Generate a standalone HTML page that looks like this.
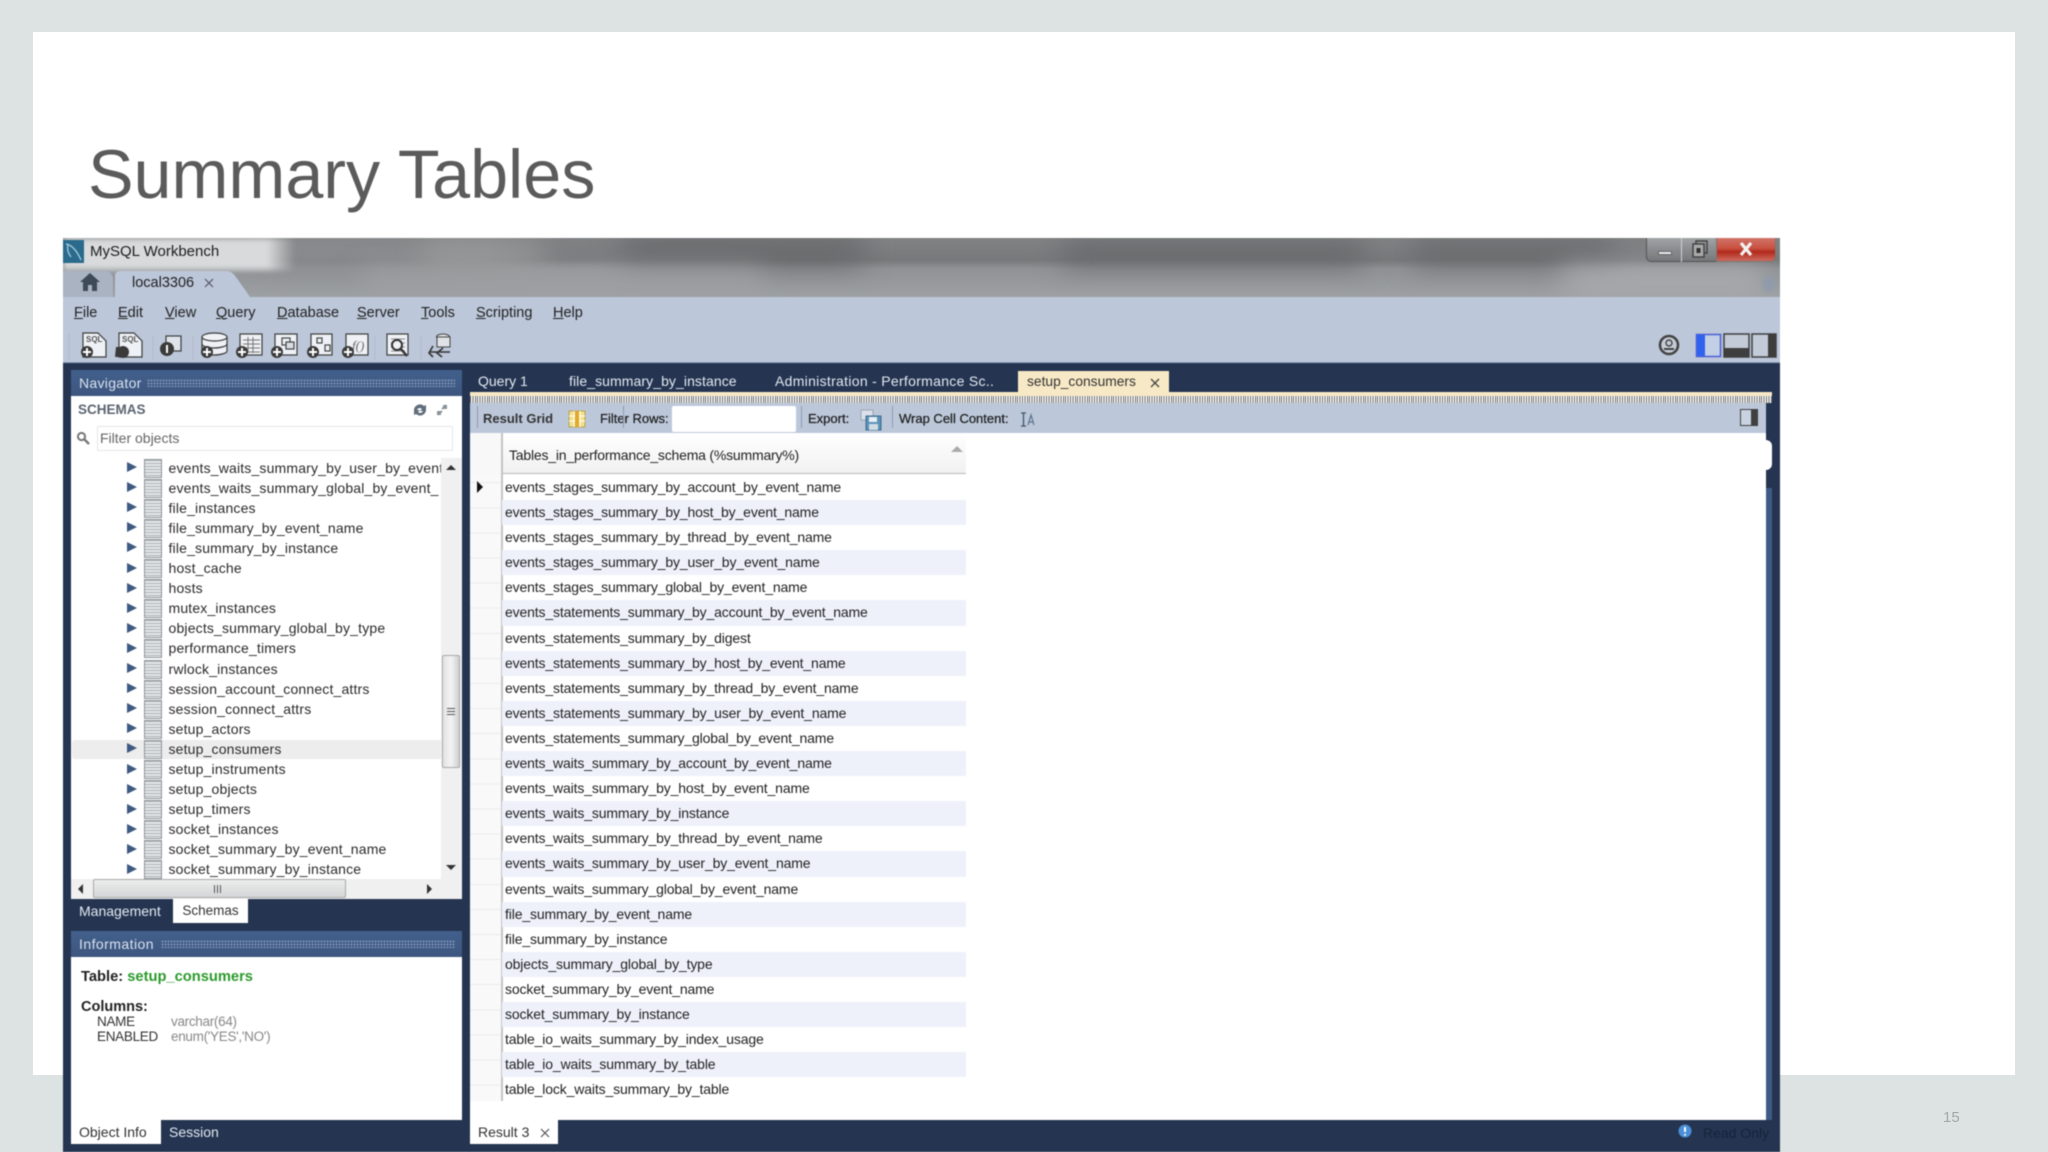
<!DOCTYPE html>
<html><head><meta charset="utf-8"><title>Summary Tables</title>
<style>
*{box-sizing:border-box}
html,body{margin:0;padding:0}
body{width:2048px;height:1152px;position:relative;overflow:hidden;background:#dde3e2;font-family:"Liberation Sans",sans-serif;color:#222}
.a{position:absolute;white-space:nowrap}
#sl{left:33px;top:32px;width:1982px;height:1043px;background:#fff}
#ttl{left:88px;top:136px;font-size:68.3px;line-height:78px;color:#5b5b5b}
#pn{left:1943px;top:1109px;font-size:15px;color:#a3a8a8}
#win{left:63px;top:238px;width:1717px;height:914px;background:#253551;overflow:hidden}
.blur{filter:blur(.45px)}
.tb{left:0;top:0;width:1717px;height:59px;background:linear-gradient(#808284 0,#77797b 22px,#909396 31px,#9ea1a4 59px)}
.sm{position:absolute;filter:blur(14px)}
.men{font-size:14.5px;top:66px;color:#222;line-height:18px}
.men u{text-decoration-thickness:1px}
.hd{background:linear-gradient(#42608c,#3d5680);color:#d9e2ee;font-size:14px;line-height:26px;height:26px;padding-left:8px}
.dots{position:absolute;top:9px;height:8px;background-image:radial-gradient(#7f95b5 .9px,transparent 1.1px);background-size:3px 3px}
.tree{left:8px;top:219.6px;width:370px;font-size:14px;letter-spacing:.17px;color:#2b2b2b;overflow:hidden}
.tr{height:20.1px;line-height:20px;position:relative;padding-left:97.5px;white-space:nowrap}
.tr:before{content:"";position:absolute;left:56px;top:4.5px;border-left:10px solid #3e5a83;border-top:5.5px solid transparent;border-bottom:5.5px solid transparent}
.tr:after{content:"";position:absolute;left:73px;top:1px;width:16px;height:17px;border:1px solid #8f959b;background:repeating-linear-gradient(#adb2b7 0 1px,#e4e6e9 1px 3px)}
.gr{left:439px;top:237px;width:496px;font-size:14px;letter-spacing:-.14px;color:#222}
.row{height:25.1px;line-height:25px;padding-left:3px;white-space:nowrap;width:464px}
.row:nth-child(even){background:#eef1fa}
.gut{position:absolute;left:407px;top:195px;width:31px;height:668px;background:repeating-linear-gradient(#f9f9f9 0 24.1px,#ececec 24.1px 25.1px)}
.tabt{font-size:14px;color:#e2e8f1;line-height:20px}
</style></head><body>
<div class="a" id="sl"></div>
<div class="a blur" id="ttl">Summary Tables</div>
<div class="a" id="pn">15</div>
<div class="a blur" id="win">
 <!-- title bar -->
 <div class="a tb"></div>
 <div class="sm" style="left:200px;top:2px;width:240px;height:28px;background:#8e9092"></div>
 <div class="sm" style="left:360px;top:4px;width:120px;height:24px;background:#9b9b9b"></div>
 <div class="sm" style="left:560px;top:0;width:240px;height:26px;background:#646668"></div>
 <div class="sm" style="left:1000px;top:4px;width:300px;height:22px;background:#636567"></div>
 <div class="sm" style="left:1350px;top:2px;width:200px;height:24px;background:#66686a"></div>
 <div class="sm" style="left:1500px;top:30px;width:200px;height:24px;background:#aeb0b2"></div>
 <div class="sm" style="left:300px;top:34px;width:400px;height:22px;background:#a0a2a4"></div>
 <div class="a" style="left:0;top:0;width:232px;height:32px;background:linear-gradient(90deg,#d8dadb 0,#d8dadb 88%,rgba(200,200,200,0));filter:blur(3px)"></div>
 <svg class="a" style="left:0;top:2px" width="22" height="24" viewBox="0 0 22 24"><rect width="21" height="23" fill="#2a6a8c"/><path d="M3 4c6 1 11 7 15 16M5 5c-1 4 0 8 3 12" stroke="#9cc6d8" stroke-width="1.4" fill="none"/></svg>
 <div class="a" style="left:27px;top:4px;font-size:15px;line-height:20px;color:#1e1e1e">MySQL Workbench</div>
 <!-- tabs -->
 <div class="a" style="left:0;top:33px;width:50px;height:26px;background:#a9b3c2;border-radius:0 8px 0 0"></div>
 <svg class="a" style="left:16px;top:34px" width="22" height="20" viewBox="0 0 22 20"><path d="M11 1 1 10h3v9h5v-6h4v6h5v-9h3z" fill="#3e4a58"/></svg>
 <svg class="a" style="left:52px;top:32px" width="200" height="27" viewBox="0 0 200 27"><path d="M0 27V6Q0 1 6 1h105q6 0 10 6l14 20z" fill="#bcc7d9"/></svg>
 <div class="a" style="left:69px;top:35px;font-size:14.5px;line-height:20px;color:#222">local3306</div>
 <svg class="a" style="left:141px;top:40px" width="10" height="10" viewBox="0 0 10 10"><path d="M1 1l8 8M9 1 1 9" stroke="#556" stroke-width="1.2"/></svg>
 <!-- window buttons -->
 <div class="a" style="left:1583px;top:0;width:98px;height:24px;border:1px solid #555;border-top:0;border-radius:0 0 5px 5px;background:linear-gradient(#a0a2a4,#8b8d90 50%,#75777a)"></div>
 <div class="a" style="left:1618px;top:0;width:1px;height:24px;background:#cfd2d4"></div>
 <div class="a" style="left:1653px;top:0;width:60px;height:24px;border:1px solid #777;border-top:0;border-radius:0 0 5px 0;background:linear-gradient(#d0756a,#c9503f 45%,#b22a1c 60%,#cf6a5e)"></div>
 <div class="a" style="left:1595px;top:13px;width:14px;height:4px;background:#e9ecef;border:1px solid #666"></div>
 <svg class="a" style="left:1628px;top:2px" width="18" height="18" viewBox="0 0 18 18"><rect x="5" y="1" width="11" height="12" fill="none" stroke="#444" stroke-width="1.5"/><rect x="2" y="4" width="11" height="13" fill="#aaa" stroke="#444" stroke-width="1.5"/><rect x="5.5" y="8" width="4" height="5" fill="#333"/></svg>
 <svg class="a" style="left:1676px;top:4px" width="14" height="14" viewBox="0 0 14 14"><path d="M2 1l10 12M12 1 2 13" stroke="#f2f2f2" stroke-width="3.2"/></svg>
 <div class="a" style="left:1700px;top:39px;width:12px;height:14px;background:#8f9aac;border-radius:6px;filter:blur(2px)"></div>
 <!-- menu + toolbar -->
 <div class="a" style="left:0;top:59px;width:1717px;height:65px;background:#bcc7d9"></div>
 <div class="a" style="left:0;top:124px;width:1717px;height:1px;background:#8ea0bd"></div>
 <div class="a men" style="left:11px"><u>F</u>ile</div>
 <div class="a men" style="left:55px"><u>E</u>dit</div>
 <div class="a men" style="left:102px"><u>V</u>iew</div>
 <div class="a men" style="left:153px"><u>Q</u>uery</div>
 <div class="a men" style="left:214px"><u>D</u>atabase</div>
 <div class="a men" style="left:294px"><u>S</u>erver</div>
 <div class="a men" style="left:358px"><u>T</u>ools</div>
 <div class="a men" style="left:413px"><u>S</u>cripting</div>
 <div class="a men" style="left:490px"><u>H</u>elp</div>
 <svg class="a" style="left:0;top:94px" width="450" height="30" viewBox="0 0 450 30">
  <g fill="#eef1f5" stroke="#3d3d3d" stroke-width="1.2">
   <path d="M20 1h15l8 8v16H20z"/><path d="M56 1h15l8 8v16H56z"/>
   <rect x="103" y="4" width="15" height="15" fill="#dfe4ea"/>
   <rect x="177" y="2" width="22" height="21"/><rect x="212" y="2" width="22" height="21"/><rect x="248" y="2" width="21" height="21"/><rect x="283" y="2" width="22" height="21"/>
   <rect x="324" y="2" width="21" height="21"/>
   <path d="M139 5v14c0 2 5 4 12 4s13-2 13-4V5z"/>
   <ellipse cx="151.500" cy="5" rx="12.500" ry="4"/>
  </g>
  <path d="M139 12c0 2 5 4 12 4s13-2 13-4" fill="none" stroke="#3d3d3d" stroke-width="1.2"/>
  <g stroke="#777" stroke-width="1"><path d="M180 8h17M180 12h17M180 16h17M180 20h17M185 5v16M190 5v16"/></g>
  <g fill="none" stroke="#444" stroke-width="1.2"><rect x="219" y="6" width="8" height="7"/><rect x="223" y="10" width="8" height="7" fill="#d8dce4"/><rect x="254" y="6" width="5" height="5"/><rect x="262" y="13" width="5" height="6"/></g>
  <g fill="#555" font-size="8" font-family="Liberation Sans" font-weight="700"><text x="23" y="10">SQL</text><text x="59" y="10">SQL</text></g>
  <text x="289" y="18" font-size="13" fill="#666" font-family="Liberation Serif" font-style="italic">f()</text>
  <g stroke="#888"><path d="M328 7h14M328 11h14M328 15h14M328 19h14"/></g>
  <circle cx="334" cy="13" r="5" fill="#eef1f5" stroke="#333" stroke-width="2"/><path d="M338 17l6 7" stroke="#333" stroke-width="2.4"/>
  <g fill="#3a3a3a"><circle cx="24" cy="20" r="6"/><circle cx="60" cy="20" r="6"/><path d="M53 15h9l2 10H52z"/><circle cx="104" cy="17" r="7"/><circle cx="144" cy="20" r="6"/><circle cx="179" cy="20" r="6"/><circle cx="214" cy="20" r="6"/><circle cx="250" cy="20" r="6"/><circle cx="285" cy="20" r="6"/></g>
  <g stroke="#fff" stroke-width="2"><path d="M20 20h8M24 16v8M140 20h8M144 16v8M175 20h8M179 16v8M210 20h8M214 16v8M246 20h8M250 16v8M281 20h8M285 16v8M104 13v8"/></g>
  <ellipse cx="380" cy="5" rx="6.500" ry="3" fill="#dfe3e8" stroke="#444"/><rect x="374" y="5" width="13" height="10" fill="#dfe3e8" stroke="#444"/><path d="M367 20h20M370 14l-4 7 4 4M380 16l-6 5 5 4" stroke="#333" stroke-width="1.6" fill="none"/>
  <g stroke="#a6b0c0" stroke-dasharray="1 1"><path d="M6 2v26M90 4v24M130 4v24M312 4v24M358 4v24"/></g>
 </svg>
 <svg class="a" style="left:1594px;top:95px" width="120" height="26" viewBox="0 0 120 26">
  <circle cx="12" cy="12" r="9" fill="#c5ccd8" stroke="#444" stroke-width="2.6"/><circle cx="12" cy="10" r="3" fill="none" stroke="#444" stroke-width="1.4"/><path d="M7 16h10" stroke="#444" stroke-width="2"/>
  <rect x="39.500" y="1.500" width="24" height="22" fill="#c3cfe4" stroke="#4860d8" stroke-width="1.5"/><rect x="40" y="2" width="8" height="21" fill="#2f62ee"/>
  <rect x="67" y="1" width="25" height="23" fill="#c3cbd8" stroke="#404040" stroke-width="1.5"/><rect x="67" y="15" width="25" height="9" fill="#3e3e3e"/>
  <rect x="95" y="1" width="24" height="23" fill="#c3cbd8" stroke="#404040" stroke-width="1.5"/><rect x="111" y="1" width="8" height="23" fill="#3e3e3e"/>
 </svg>
 <!-- navigator -->
 <div class="a hd" style="left:8px;top:132px;width:391px;letter-spacing:.3px">Navigator<div class="dots" style="left:76px;width:308px"></div></div>
 <div class="a" style="left:8px;top:158px;width:391px;height:503px;background:#fff"></div>
 <div class="a" style="left:15px;top:160px;font-size:13.5px;font-weight:700;line-height:24px;color:#5b6470">SCHEMAS</div>
 <svg class="a" style="left:350px;top:165px" width="36" height="14" viewBox="0 0 36 14"><path d="M1 7a6 6 0 0 1 10-4l2-1v6H7l2-2a3 3 0 0 0-5 1zM13 7a6 6 0 0 1-10 4l-2 1V7h6L5 9a3 3 0 0 0 5-1z" fill="#5f6d7c"/><path d="M25 12l4-4M33 2l-4 4" stroke="#6d7883" stroke-width="1.4"/><rect x="24" y="8" width="4" height="4" fill="#8a939c"/><rect x="30" y="2" width="4" height="4" fill="#8a939c"/></svg>
 <svg class="a" style="left:13px;top:193px" width="14" height="14" viewBox="0 0 14 14"><circle cx="5.5" cy="5.5" r="3.6" fill="none" stroke="#777" stroke-width="2"/><path d="M8 8l5 5" stroke="#777" stroke-width="2.4"/></svg>
 <div class="a" style="left:34px;top:188px;width:356px;height:25px;background:#fff;border:1px solid #e6e6e6;font-size:14px;line-height:23px;color:#666;padding-left:2px">Filter objects</div>
 <div class="a" style="left:9px;top:502px;width:371px;height:19px;background:#ededed;border-radius:3px"></div>
 <div class="a tree">
  <div class="tr">events_waits_summary_by_user_by_event</div><div class="tr">events_waits_summary_global_by_event_</div><div class="tr">file_instances</div><div class="tr">file_summary_by_event_name</div><div class="tr">file_summary_by_instance</div><div class="tr">host_cache</div><div class="tr">hosts</div><div class="tr">mutex_instances</div><div class="tr">objects_summary_global_by_type</div><div class="tr">performance_timers</div><div class="tr">rwlock_instances</div><div class="tr">session_account_connect_attrs</div><div class="tr">session_connect_attrs</div><div class="tr">setup_actors</div><div class="tr">setup_consumers</div><div class="tr">setup_instruments</div><div class="tr">setup_objects</div><div class="tr">setup_timers</div><div class="tr">socket_instances</div><div class="tr">socket_summary_by_event_name</div><div class="tr">socket_summary_by_instance</div>
 </div>
 <!-- tree scrollbars -->
 <div class="a" style="left:378px;top:220px;width:21px;height:421px;background:#f0f0f0"></div>
 <div class="a" style="left:379px;top:417px;width:18px;height:113px;background:linear-gradient(90deg,#e2e3e4,#f3f3f3 50%,#cfd0d1);border:1px solid #a9a9a9;border-radius:2px"></div>
 <div class="a" style="left:384px;top:470px;width:8px;height:8px;background:repeating-linear-gradient(#555 0 1px,transparent 1px 3px)"></div>
 <div class="a" style="left:383px;top:227px;border-bottom:5px solid #333;border-left:5px solid transparent;border-right:5px solid transparent"></div>
 <div class="a" style="left:383px;top:627px;border-top:5px solid #333;border-left:5px solid transparent;border-right:5px solid transparent"></div>
 <div class="a" style="left:8px;top:641px;width:391px;height:20px;background:#f0f0f0"></div>
 <div class="a" style="left:30px;top:641px;width:253px;height:19px;background:linear-gradient(#eceded,#d5d6d7);border:1px solid #a9a9a9;border-radius:2px"></div>
 <div class="a" style="left:151px;top:647px;width:8px;height:8px;background:repeating-linear-gradient(90deg,#555 0 1px,transparent 1px 3px)"></div>
 <div class="a" style="left:15px;top:646px;border-right:5px solid #333;border-top:5px solid transparent;border-bottom:5px solid transparent"></div>
 <div class="a" style="left:364px;top:646px;border-left:5px solid #333;border-top:5px solid transparent;border-bottom:5px solid transparent"></div>
 <!-- nav tabs -->
 <div class="a tabt" style="left:16px;top:663px">Management</div>
 <div class="a" style="left:110px;top:661px;width:75px;height:24px;background:#fff;font-size:13.5px;color:#333;line-height:24px;text-align:center">Schemas</div>
 <!-- info -->
 <div class="a hd" style="left:8px;top:693px;width:391px;letter-spacing:.45px">Information<div class="dots" style="left:90px;width:294px"></div></div>
 <div class="a" style="left:8px;top:719px;width:391px;height:163px;background:#fff"></div>
 <div class="a" style="left:18px;top:730px;font-size:14.7px;font-weight:700;line-height:18px;color:#222">Table: <span style="color:#2c9a2c">setup_consumers</span></div>
 <div class="a" style="left:18px;top:760px;font-size:14.5px;font-weight:700;line-height:18px;color:#222">Columns:</div>
 <div class="a" style="left:34px;top:776px;font-size:13.5px;line-height:15px;color:#333;letter-spacing:-.3px">NAME<br>ENABLED</div>
 <div class="a" style="left:108px;top:776px;font-size:13.5px;line-height:15px;color:#888;letter-spacing:-.3px">varchar(64)<br>enum('YES','NO')</div>
 <div class="a" style="left:8px;top:882px;width:90px;height:24px;background:#fff;font-size:14px;color:#333;line-height:24px;padding-left:8px">Object Info</div>
 <div class="a tabt" style="left:106px;top:884px">Session</div>
 <!-- editor tabs -->
 <div class="a tabt" style="left:415px;top:133px">Query 1</div>
 <div class="a tabt" style="left:506px;top:133px;letter-spacing:.08px">file_summary_by_instance</div>
 <div class="a tabt" style="left:712px;top:133px;letter-spacing:.3px">Administration - Performance Sc..</div>
 <div class="a" style="left:955px;top:133px;width:151px;height:22px;background:#f8e9c6;font-size:13.8px;line-height:22px;color:#333;padding-left:9px">setup_consumers</div>
 <svg class="a" style="left:1087px;top:140px" width="10" height="10" viewBox="0 0 10 10"><path d="M1 1l8 8M9 1 1 9" stroke="#444" stroke-width="1.3"/></svg>
 <!-- editor area -->
 <div class="a" style="left:407px;top:154px;width:1302px;height:4px;background:#f8e9c6"></div>
 <div class="a" style="left:407px;top:158px;width:1302px;height:7px;background:#fff repeating-linear-gradient(90deg,#666 0 1px,#fff 1px 2.4px)"></div>
 <div class="a" style="left:407px;top:165px;width:1296px;height:30px;background:#bcc8da"></div>
 <div class="a" style="left:407px;top:195px;width:1296px;height:687px;background:#fff"></div>
 <div class="a" style="left:1703px;top:165px;width:6px;height:717px;background:#3f5a85"></div>
 <div class="a" style="left:1703px;top:165px;width:6px;height:85px;background:#253551"></div>
 <div class="a" style="left:1703px;top:202px;width:6px;height:30px;background:#fff;border-radius:0 8px 8px 0"></div>
 <div class="a" style="left:1709px;top:154px;width:8px;height:728px;background:#253551"></div>
 <div class="a" style="left:420px;top:169px;font-size:13px;font-weight:700;line-height:24px;color:#333">Result Grid</div>
 <svg class="a" style="left:505px;top:172px" width="18" height="18" viewBox="0 0 18 18"><rect x="1" y="1" width="16" height="16" fill="#f2e08a" stroke="#b5a24f"/><path d="M6 1v16M12 1v16M1 6h16M1 11h16" stroke="#fff" stroke-width="1"/><rect x="7" y="1" width="4" height="16" fill="#e2a92c"/></svg>
 <div class="a" style="left:537px;top:172px;font-size:13px;line-height:18px;color:#222;-webkit-text-stroke:.25px #222">Filter Rows:</div>
 <div class="a" style="left:609px;top:168px;width:124px;height:26px;background:#fff;border-radius:2px"></div>
 <div class="a" style="left:745px;top:172px;font-size:13px;line-height:18px;color:#222;-webkit-text-stroke:.25px #222">Export:</div>
 <svg class="a" style="left:797px;top:171px" width="22" height="22" viewBox="0 0 22 22"><rect x="1" y="1" width="12" height="10" fill="#dbe1ea" stroke="#98a2b2"/><rect x="6" y="7" width="15" height="14" fill="#5b93b8" stroke="#3c6a8c"/><rect x="9" y="8" width="8" height="5" fill="#e8eef4"/><rect x="9" y="15" width="9" height="6" fill="#d0dbe4"/></svg>
 <div class="a" style="left:836px;top:172px;font-size:13px;line-height:18px;color:#222;-webkit-text-stroke:.25px #222">Wrap Cell Content:</div>
 <svg class="a" style="left:957px;top:174px" width="16" height="15" viewBox="0 0 16 15"><path d="M1 1h5M1 14h5M3.500 1v13" stroke="#3f556e" stroke-width="1.3"/><path d="M8 13l3-10 3 10M9 10h4" stroke="#5c738c" fill="none" stroke-width="1.2"/></svg>
 <div class="a" style="left:1677px;top:171px;width:18px;height:17px;background:#c9d2e0;border:1.5px solid #404040"></div>
 <div class="a" style="left:1688px;top:171px;width:7px;height:17px;background:#404040"></div>
 <div class="a" style="left:414px;top:168px;width:1px;height:22px;background:#8d9ab0"></div>
 <div class="a" style="left:560px;top:168px;width:1px;height:22px;background:#8d9ab0"></div>
 <div class="a" style="left:738px;top:168px;width:1px;height:22px;background:#8d9ab0"></div>
 <div class="a" style="left:829px;top:168px;width:1px;height:22px;background:#8d9ab0"></div>
 <!-- grid -->
 <div class="gut"></div>
 <div class="a" style="left:407px;top:195px;width:31px;height:42px;background:#f8f8f8"></div>
 <div class="a" style="left:439px;top:195px;width:464px;height:41px;background:linear-gradient(#fff,#f1f1f1);border-bottom:1.5px solid #b9b9b9"></div>
 <div class="a" style="left:438px;top:195px;width:2px;height:668px;background:#c4c4c4"></div>
 <div class="a" style="left:446px;top:208px;font-size:14px;line-height:18px;color:#222;letter-spacing:-.2px">Tables_in_performance_schema (%summary%)</div>
 <div class="a" style="left:888px;top:208px;border-bottom:6px solid #aaa;border-left:6px solid transparent;border-right:6px solid transparent"></div>
 <div class="a" style="left:414px;top:243px;border-left:6px solid #111;border-top:6px solid transparent;border-bottom:6px solid transparent"></div>
 <div class="a gr">
  <div class="row">events_stages_summary_by_account_by_event_name</div>
  <div class="row">events_stages_summary_by_host_by_event_name</div>
  <div class="row">events_stages_summary_by_thread_by_event_name</div>
  <div class="row">events_stages_summary_by_user_by_event_name</div>
  <div class="row">events_stages_summary_global_by_event_name</div>
  <div class="row">events_statements_summary_by_account_by_event_name</div>
  <div class="row">events_statements_summary_by_digest</div>
  <div class="row">events_statements_summary_by_host_by_event_name</div>
  <div class="row">events_statements_summary_by_thread_by_event_name</div>
  <div class="row">events_statements_summary_by_user_by_event_name</div>
  <div class="row">events_statements_summary_global_by_event_name</div>
  <div class="row">events_waits_summary_by_account_by_event_name</div>
  <div class="row">events_waits_summary_by_host_by_event_name</div>
  <div class="row">events_waits_summary_by_instance</div>
  <div class="row">events_waits_summary_by_thread_by_event_name</div>
  <div class="row">events_waits_summary_by_user_by_event_name</div>
  <div class="row">events_waits_summary_global_by_event_name</div>
  <div class="row">file_summary_by_event_name</div>
  <div class="row">file_summary_by_instance</div>
  <div class="row">objects_summary_global_by_type</div>
  <div class="row">socket_summary_by_event_name</div>
  <div class="row">socket_summary_by_instance</div>
  <div class="row">table_io_waits_summary_by_index_usage</div>
  <div class="row">table_io_waits_summary_by_table</div>
  <div class="row">table_lock_waits_summary_by_table</div>
 </div>
 <!-- bottom -->
 <div class="a" style="left:407px;top:882px;width:88px;height:24px;background:#fff;font-size:14px;color:#333;line-height:24px;padding-left:8px">Result 3</div>
 <svg class="a" style="left:477px;top:890px" width="10" height="10" viewBox="0 0 10 10"><path d="M1 1l8 8M9 1 1 9" stroke="#555" stroke-width="1.2"/></svg>
 <svg class="a" style="left:1615px;top:886px" width="14" height="14" viewBox="0 0 14 14"><circle cx="7" cy="7" r="6.5" fill="#4a8fd8"/><path d="M7 3v5M7 10v1.6" stroke="#fff" stroke-width="2"/></svg>
 <div class="a" style="left:1640px;top:887px;font-size:14px;line-height:16px;color:#16233c">Read Only</div>
</div>
</body></html>
